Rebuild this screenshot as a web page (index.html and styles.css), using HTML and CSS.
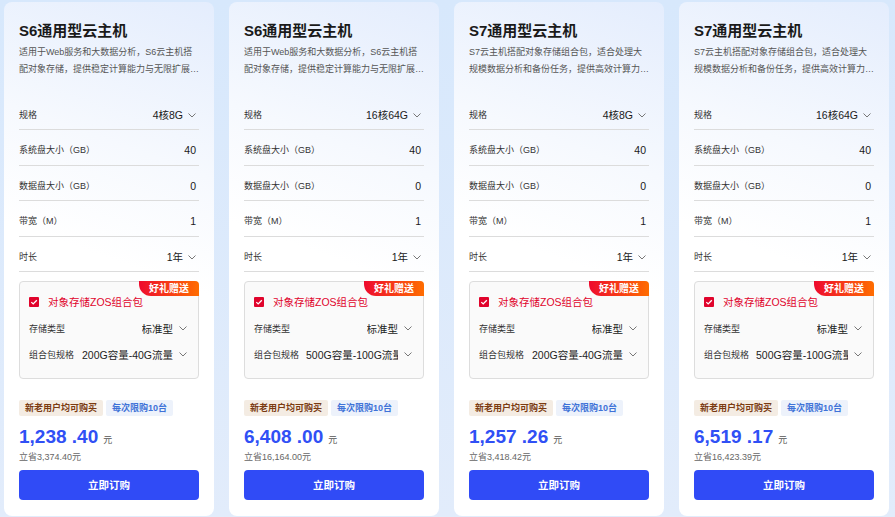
FILE: index.html
```html
<!DOCTYPE html>
<html lang="zh-CN">
  <head>
    <meta charset="UTF-8" />
    <meta name="viewport" content="width=device-width, initial-scale=1.0" />
    <title>云主机套餐</title>
    <link rel="stylesheet" href="styles.css">
  </head>
  <body>
    <div class="cards">
      <div class="card">
        <h3 class="title">S6通用型云主机</h3>
        <p class="desc">适用于Web服务和大数据分析，S6云主机搭配对象存储，提供稳定计算能力与无限扩展的存储空间。</p>
        <div class="row"><span class="label">规格</span><span class="value">4核8G<svg class="arrow" viewBox="0 0 8 5"><path d="M0.5 0.5L4 4L7.5 0.5" /></svg></span></div>
        <div class="row"><span class="label">系统盘大小（GB）</span><span class="value">40</span></div>
        <div class="row"><span class="label">数据盘大小（GB）</span><span class="value">0</span></div>
        <div class="row"><span class="label">带宽（M）</span><span class="value">1</span></div>
        <div class="row"><span class="label">时长</span><span class="value">1年<svg class="arrow" viewBox="0 0 8 5"><path d="M0.5 0.5L4 4L7.5 0.5" /></svg></span></div>
        <div class="pack">
          <span class="gift">好礼赠送</span>
          <div class="pack-head"><span class="check"><svg viewBox="0 0 10 10"><path d="M2.3 5.1L4.2 6.9L7.8 3.2" /></svg></span>对象存储ZOS组合包</div>
          <div class="pack-row"><span class="pack-label">存储类型</span><span class="pack-value">标准型</span><svg class="arrow" viewBox="0 0 8 5"><path d="M0.5 0.5L4 4L7.5 0.5" /></svg></div>
          <div class="pack-row"><span class="pack-label">组合包规格</span><span class="pack-value">200G容量-40G流量</span><svg class="arrow" viewBox="0 0 8 5"><path d="M0.5 0.5L4 4L7.5 0.5" /></svg></div>
        </div>
        <div class="tags"><span class="tag tag-brown">新老用户均可购买</span><span class="tag tag-blue">每次限购10台</span></div>
        <div class="price">1,238 .40<span class="unit">元</span></div>
        <div class="save">立省3,374.40元</div>
        <button class="buy">立即订购</button>
      </div>

      <div class="card">
        <h3 class="title">S6通用型云主机</h3>
        <p class="desc">适用于Web服务和大数据分析，S6云主机搭配对象存储，提供稳定计算能力与无限扩展的存储空间。</p>
        <div class="row"><span class="label">规格</span><span class="value">16核64G<svg class="arrow" viewBox="0 0 8 5"><path d="M0.5 0.5L4 4L7.5 0.5" /></svg></span></div>
        <div class="row"><span class="label">系统盘大小（GB）</span><span class="value">40</span></div>
        <div class="row"><span class="label">数据盘大小（GB）</span><span class="value">0</span></div>
        <div class="row"><span class="label">带宽（M）</span><span class="value">1</span></div>
        <div class="row"><span class="label">时长</span><span class="value">1年<svg class="arrow" viewBox="0 0 8 5"><path d="M0.5 0.5L4 4L7.5 0.5" /></svg></span></div>
        <div class="pack">
          <span class="gift">好礼赠送</span>
          <div class="pack-head"><span class="check"><svg viewBox="0 0 10 10"><path d="M2.3 5.1L4.2 6.9L7.8 3.2" /></svg></span>对象存储ZOS组合包</div>
          <div class="pack-row"><span class="pack-label">存储类型</span><span class="pack-value">标准型</span><svg class="arrow" viewBox="0 0 8 5"><path d="M0.5 0.5L4 4L7.5 0.5" /></svg></div>
          <div class="pack-row"><span class="pack-label">组合包规格</span><span class="pack-value">500G容量-100G流量</span><svg class="arrow" viewBox="0 0 8 5"><path d="M0.5 0.5L4 4L7.5 0.5" /></svg></div>
        </div>
        <div class="tags"><span class="tag tag-brown">新老用户均可购买</span><span class="tag tag-blue">每次限购10台</span></div>
        <div class="price">6,408 .00<span class="unit">元</span></div>
        <div class="save">立省16,164.00元</div>
        <button class="buy">立即订购</button>
      </div>

      <div class="card">
        <h3 class="title">S7通用型云主机</h3>
        <p class="desc">S7云主机搭配对象存储组合包，适合处理大规模数据分析和备份任务，提供高效计算力与海量存储。</p>
        <div class="row"><span class="label">规格</span><span class="value">4核8G<svg class="arrow" viewBox="0 0 8 5"><path d="M0.5 0.5L4 4L7.5 0.5" /></svg></span></div>
        <div class="row"><span class="label">系统盘大小（GB）</span><span class="value">40</span></div>
        <div class="row"><span class="label">数据盘大小（GB）</span><span class="value">0</span></div>
        <div class="row"><span class="label">带宽（M）</span><span class="value">1</span></div>
        <div class="row"><span class="label">时长</span><span class="value">1年<svg class="arrow" viewBox="0 0 8 5"><path d="M0.5 0.5L4 4L7.5 0.5" /></svg></span></div>
        <div class="pack">
          <span class="gift">好礼赠送</span>
          <div class="pack-head"><span class="check"><svg viewBox="0 0 10 10"><path d="M2.3 5.1L4.2 6.9L7.8 3.2" /></svg></span>对象存储ZOS组合包</div>
          <div class="pack-row"><span class="pack-label">存储类型</span><span class="pack-value">标准型</span><svg class="arrow" viewBox="0 0 8 5"><path d="M0.5 0.5L4 4L7.5 0.5" /></svg></div>
          <div class="pack-row"><span class="pack-label">组合包规格</span><span class="pack-value">200G容量-40G流量</span><svg class="arrow" viewBox="0 0 8 5"><path d="M0.5 0.5L4 4L7.5 0.5" /></svg></div>
        </div>
        <div class="tags"><span class="tag tag-brown">新老用户均可购买</span><span class="tag tag-blue">每次限购10台</span></div>
        <div class="price">1,257 .26<span class="unit">元</span></div>
        <div class="save">立省3,418.42元</div>
        <button class="buy">立即订购</button>
      </div>

      <div class="card">
        <h3 class="title">S7通用型云主机</h3>
        <p class="desc">S7云主机搭配对象存储组合包，适合处理大规模数据分析和备份任务，提供高效计算力与海量存储。</p>
        <div class="row"><span class="label">规格</span><span class="value">16核64G<svg class="arrow" viewBox="0 0 8 5"><path d="M0.5 0.5L4 4L7.5 0.5" /></svg></span></div>
        <div class="row"><span class="label">系统盘大小（GB）</span><span class="value">40</span></div>
        <div class="row"><span class="label">数据盘大小（GB）</span><span class="value">0</span></div>
        <div class="row"><span class="label">带宽（M）</span><span class="value">1</span></div>
        <div class="row"><span class="label">时长</span><span class="value">1年<svg class="arrow" viewBox="0 0 8 5"><path d="M0.5 0.5L4 4L7.5 0.5" /></svg></span></div>
        <div class="pack">
          <span class="gift">好礼赠送</span>
          <div class="pack-head"><span class="check"><svg viewBox="0 0 10 10"><path d="M2.3 5.1L4.2 6.9L7.8 3.2" /></svg></span>对象存储ZOS组合包</div>
          <div class="pack-row"><span class="pack-label">存储类型</span><span class="pack-value">标准型</span><svg class="arrow" viewBox="0 0 8 5"><path d="M0.5 0.5L4 4L7.5 0.5" /></svg></div>
          <div class="pack-row"><span class="pack-label">组合包规格</span><span class="pack-value">500G容量-100G流量</span><svg class="arrow" viewBox="0 0 8 5"><path d="M0.5 0.5L4 4L7.5 0.5" /></svg></div>
        </div>
        <div class="tags"><span class="tag tag-brown">新老用户均可购买</span><span class="tag tag-blue">每次限购10台</span></div>
        <div class="price">6,519 .17<span class="unit">元</span></div>
        <div class="save">立省16,423.39元</div>
        <button class="buy">立即订购</button>
      </div>
    </div>
  </body>
</html>
```

FILE: styles.css
```css
* {
  box-sizing: border-box;
  margin: 0;
  padding: 0;
}
body {
  font-family: "Liberation Sans", "Noto Sans CJK SC", sans-serif;
  background: linear-gradient(180deg, #d7e8fc 0%, #e2ecfb 100%);
  width: 895px;
  height: 517px;
  overflow: hidden;
  color: #222;
}
.cards {
  display: flex;
  gap: 15px;
  padding: 2px 0 0 4px;
}
.card {
  width: 210px;
  height: 514px;
  border-radius: 8px;
  padding: 20px 15px 0;
  background: linear-gradient(200deg, #e4edfd 0%, #f6f9fe 30%, #ffffff 50%);
}
.title {
  font-size: 15px;
  font-weight: 700;
  line-height: 18px;
  color: #1a1a1a;
}
.desc {
  margin: 4px -1.5px 16.5px 0;
  font-size: 9px;
  line-height: 17px;
  color: #555;
  height: 34px;
  display: -webkit-box;
  -webkit-line-clamp: 2;
  -webkit-box-orient: vertical;
  overflow: hidden;
}
.row {
  display: flex;
  justify-content: space-between;
  align-items: flex-start;
  height: 35.5px;
  padding-top: 12px;
  border-bottom: 1px solid #dcdcdc;
}
.label {
  font-size: 9px;
  line-height: 17px;
  color: #333;
}
.value {
  display: flex;
  align-items: center;
  font-size: 10.5px;
  line-height: 17px;
  color: #1a1a1a;
  padding-right: 3px;
}
.arrow {
  width: 8px;
  height: 5px;
  margin-left: 5px;
  fill: none;
  stroke: #777;
  stroke-width: 1;
}
.pack {
  position: relative;
  margin-top: 8.5px;
  height: 98px;
  border: 1px solid #dddddd;
  border-radius: 4px;
  background: #fafafa;
  padding: 12px 11px 0 9px;
}
.gift {
  position: absolute;
  top: -1px;
  right: -1px;
  width: 60px;
  height: 15px;
  border-radius: 0 4px 0 12px;
  background: linear-gradient(90deg, #ee0a2e 0%, #ff6d00 100%);
  color: #fff;
  font-size: 10px;
  font-weight: 700;
  line-height: 15px;
  text-align: center;
}
.pack-head {
  display: flex;
  align-items: center;
  font-size: 10.5px;
  line-height: 17px;
  color: #e0042c;
}
.check {
  width: 10px;
  height: 10px;
  border-radius: 1px;
  background: #e0042c;
  margin-right: 9px;
  display: flex;
}
.check svg {
  width: 10px;
  height: 10px;
  fill: none;
  stroke: #fff;
  stroke-width: 1.3;
}
.pack-row {
  display: flex;
  align-items: center;
  margin-top: 9px;
  height: 17px;
}
.pack-label {
  font-size: 9px;
  color: #333;
  flex: 1;
  white-space: nowrap;
}
.pack-value {
  font-size: 10.5px;
  color: #222;
  max-width: 92px;
  overflow: hidden;
  white-space: nowrap;
}
.pack-row .arrow {
  margin-left: 6px;
}
.tags {
  display: flex;
  gap: 3px;
  margin-top: 21px;
}
.tag {
  font-size: 9px;
  font-weight: 700;
  line-height: 16px;
  padding: 0 6px;
  border-radius: 2px;
}
.tag-brown {
  background: #f4ece3;
  color: #7b3b12;
}
.tag-blue {
  background: #edf2fb;
  color: #3f72d8;
}
.price {
  margin-top: 9px;
  font-size: 19px;
  font-weight: 700;
  line-height: 24px;
  color: #3050f5;
}
.unit {
  font-size: 9px;
  font-weight: 400;
  line-height: 1;
  color: #555;
  margin-left: 5px;
}
.save {
  margin-top: 1px;
  font-size: 9px;
  line-height: 14px;
  color: #666;
}
.buy {
  margin-top: 6px;
  width: 100%;
  height: 30px;
  border: none;
  border-radius: 4px;
  background: #304bf6;
  color: #fff;
  font-family: inherit;
  font-size: 10.5px;
  font-weight: 700;
}
```
